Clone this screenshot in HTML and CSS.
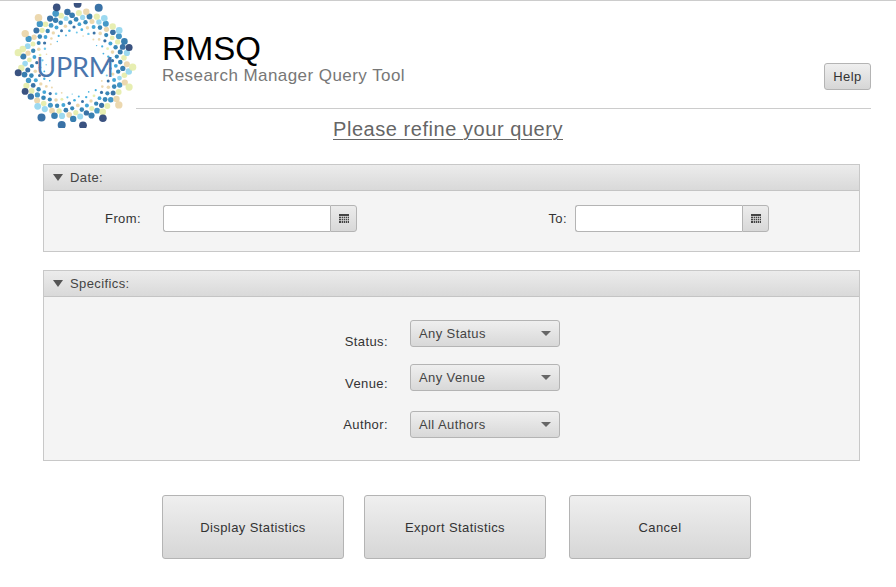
FILE: index.html
```html
<!doctype html>
<html>

<head>
  <meta name="viewport" content="width=device-width, initial-scale=1.0">
  <title>RMSQ</title>
  <link rel="stylesheet" href="styles.css">
</head>

<body>

  <div id="head">
    <svg id="logo" viewBox="0 0 130 125" width="130" height="125">
      <g id="logoDots"></g>
      <text x="65" y="74" text-anchor="middle" class="logo-text">UPRM</text>
    </svg>
    <div id="brand">
      <div>
        <h1>RMSQ</h1>
        <p class="subtitle">Research Manager Query Tool</p>
      </div>
      <button class="btn btn-help">Help</button>
    </div>
  </div>

  <h2 class="refine">Please refine your query</h2>

  <div class="panel">
    <div class="panel-head"><span class="arrow"></span>Date:</div>
    <div class="panel-body date-body">
      <label class="from-label">From:</label>
      <div class="date-field">
        <input type="text">
        <button class="cal-btn">
          <svg width="10" height="9" viewBox="0 0 10 9">
            <rect width="10" height="9" fill="#444" />
            <path d="M0 2.5h10M0 4.5h10M0 6.5h10M2.5 2v7M4.5 2v7M6.5 2v7M8.5 2v7" stroke="#ddd" stroke-width=".7" />
          </svg>
        </button>
      </div>
      <label class="to-label">To:</label>
      <div class="date-field">
        <input type="text">
        <button class="cal-btn">
          <svg width="10" height="9" viewBox="0 0 10 9">
            <rect width="10" height="9" fill="#444" />
            <path d="M0 2.5h10M0 4.5h10M0 6.5h10M2.5 2v7M4.5 2v7M6.5 2v7M8.5 2v7" stroke="#ddd" stroke-width=".7" />
          </svg>
        </button>
      </div>
    </div>
  </div>

  <div class="panel panel-specifics">
    <div class="panel-head"><span class="arrow"></span>Specifics:</div>
    <div class="panel-body spec-body">
      <div class="spec-row row-status">
        <label>Status:</label>
        <div class="select"><span>Any Status</span><span class="select-arrow"></span></div>
      </div>
      <div class="spec-row row-venue">
        <label>Venue:</label>
        <div class="select"><span>Any Venue</span><span class="select-arrow"></span></div>
      </div>
      <div class="spec-row row-author">
        <label>Author:</label>
        <div class="select"><span>All Authors</span><span class="select-arrow"></span></div>
      </div>
    </div>
  </div>

  <div class="actions">
    <button class="btn btn-big">Display Statistics</button>
    <button class="btn btn-big btn-export">Export Statistics</button>
    <button class="btn btn-big btn-cancel">Cancel</button>
  </div>

  <script src="logo.js"></script>
</body>

</html>
```

FILE: styles.css
```css
* {
  margin: 0;
  padding: 0;
  box-sizing: border-box;
}

body {
  font: 13px "Liberation Sans", Arial, sans-serif;
  letter-spacing: .4px;
  color: #333;
  background: #fff;
  border-top: 1px solid #ccc;
  height: 587px;
  overflow: hidden;
}

#head {
  display: flex;
  height: 108px;
}

#logo {
  flex: none;
  margin: 2px -4px 0 10px;
}

.logo-text {
  font: 400 27px Lato, sans-serif;
  letter-spacing: -.2px;
  fill: #4a76ad;
}

#brand {
  flex: 1;
  height: 108px;
  margin-right: 25px;
  padding-left: 26px;
  border-bottom: 1px solid #ccc;
  display: flex;
  justify-content: space-between;
  align-items: flex-start;
}

h1 {
  font-size: 33px;
  font-weight: normal;
  line-height: 36px;
  margin-top: 30px;
  color: #000;
  letter-spacing: 0;
}

.subtitle {
  font-size: 17px;
  line-height: 18px;
  color: #777;
  letter-spacing: .44px;
}

.btn {
  font: inherit;
  letter-spacing: inherit;
  color: #333;
  background: linear-gradient(#efefef, #d6d6d6);
  border: 1px solid #b4b4b4;
  border-radius: 3px;
}

.btn-help {
  width: 47px;
  height: 27px;
  margin-top: 62px;
}

.refine {
  font-size: 20px;
  font-weight: normal;
  line-height: 24px;
  margin: 8px 0 23px;
  text-align: center;
  color: #666;
  letter-spacing: .55px;
  text-decoration: underline;
  text-underline-offset: 3px;
  text-decoration-thickness: 1px;
}

.panel {
  width: 817px;
  margin-left: 43px;
  border: 1px solid #c8c8c8;
}

.panel-specifics {
  margin-top: 18px;
}

.panel-head {
  height: 26px;
  line-height: 25px;
  padding-left: 9px;
  background: linear-gradient(#ececec, #d9d9d9);
  border-bottom: 1px solid #c4c4c4;
  display: flex;
  align-items: center;
  color: #444;
}

.arrow {
  width: 0;
  height: 0;
  border-left: 5px solid transparent;
  border-right: 5px solid transparent;
  border-top: 7px solid #555;
  margin-right: 7px;
}

.panel-body {
  background: #f4f4f4;
}

.date-body {
  height: 60px;
  padding-top: 14px;
  display: flex;
  align-items: flex-start;
}

.date-body label {
  line-height: 27px;
  text-align: right;
}

.from-label {
  width: 97px;
  margin-right: 22px;
}

.to-label {
  width: 210px;
  margin-right: 8px;
}

.date-field {
  width: 194px;
  height: 27px;
  display: flex;
}

.date-field input {
  flex: 1;
  min-width: 0;
  background: #fff;
  border: 1px solid #b4b4b4;
  border-right: 0;
  border-radius: 3px 0 0 3px;
}

.cal-btn {
  width: 27px;
  display: flex;
  align-items: center;
  justify-content: center;
  background: linear-gradient(#ececec, #d8d8d8);
  border: 1px solid #b4b4b4;
  border-radius: 0 3px 3px 0;
}

.spec-body {
  height: 163px;
  padding-top: 23px;
}

.spec-row {
  display: flex;
  height: 27px;
  padding-left: 260px;
}

.spec-row label {
  width: 84px;
  line-height: 15px;
  text-align: right;
  margin-right: 22px;
}

.row-status label {
  padding-top: 14px;
}

.row-venue {
  margin-top: 17px;
}

.row-venue label {
  padding-top: 12px;
}

.row-author {
  margin-top: 20px;
}

.row-author label {
  padding-top: 6px;
}

.select {
  width: 150px;
  height: 27px;
  padding: 0 8px;
  display: flex;
  align-items: center;
  justify-content: space-between;
  background: linear-gradient(#efefef, #d8d8d8);
  border: 1px solid #b4b4b4;
  border-radius: 3px;
  color: #444;
}

.select-arrow {
  width: 0;
  height: 0;
  border-left: 5px solid transparent;
  border-right: 5px solid transparent;
  border-top: 5px solid #666;
}

.actions {
  display: flex;
  margin: 34px 0 0 162px;
}

.btn-big {
  width: 182px;
  height: 64px;
}

.btn-export {
  margin-left: 20px;
}

.btn-cancel {
  margin-left: 23px;
}
```

FILE: logo.js
```js
// draws the dotted ring of the logo, dots laid out on a sunflower spiral
var inner = ["#2ba6dc", "#2ba6dc", "#e9d3a4", "#5cc0e8"];
var middle = ["#1d76ad", "#2b9ad0", "#e9d3a4", "#1f5f9a", "#e4eca6", "#1d76ad"];
var outer = ["#e4eca6", "#e9d3a4", "#1f5f9a", "#8ed4ee", "#2b8abf", "#1d6ca5", "#e4eca6"];
var last = ["#1f3a6e", "#e9d3a4", "#e4eca6", "#1f3a6e", "#8ed4ee", "#1f5f9a"];
var dots = document.getElementById("logoDots");
var cx = 65, cy = 62;
var html = "";

for (var n = 72; n < 340; n++) {
  var r = 3.4 * Math.sqrt(n);
  var angle = n * 2.39996;
  var size = 0.7 + (r - 29) * 0.1;
  var list = r < 36 ? inner : r < 46 ? middle : r < 55 ? outer : last;
  var color = list[(n * 5 + (n % 13)) % list.length];
  // outer band is sparse
  if (r >= 55 && n % 4 != 0) continue;
  html += '<circle cx="' + (cx + r * Math.cos(angle)).toFixed(1) + '" cy="' + (cy + r * Math.sin(angle)).toFixed(1) +
    '" r="' + size.toFixed(1) + '" fill="' + color + '" opacity=".88"/>';
}
dots.innerHTML = html;
```
